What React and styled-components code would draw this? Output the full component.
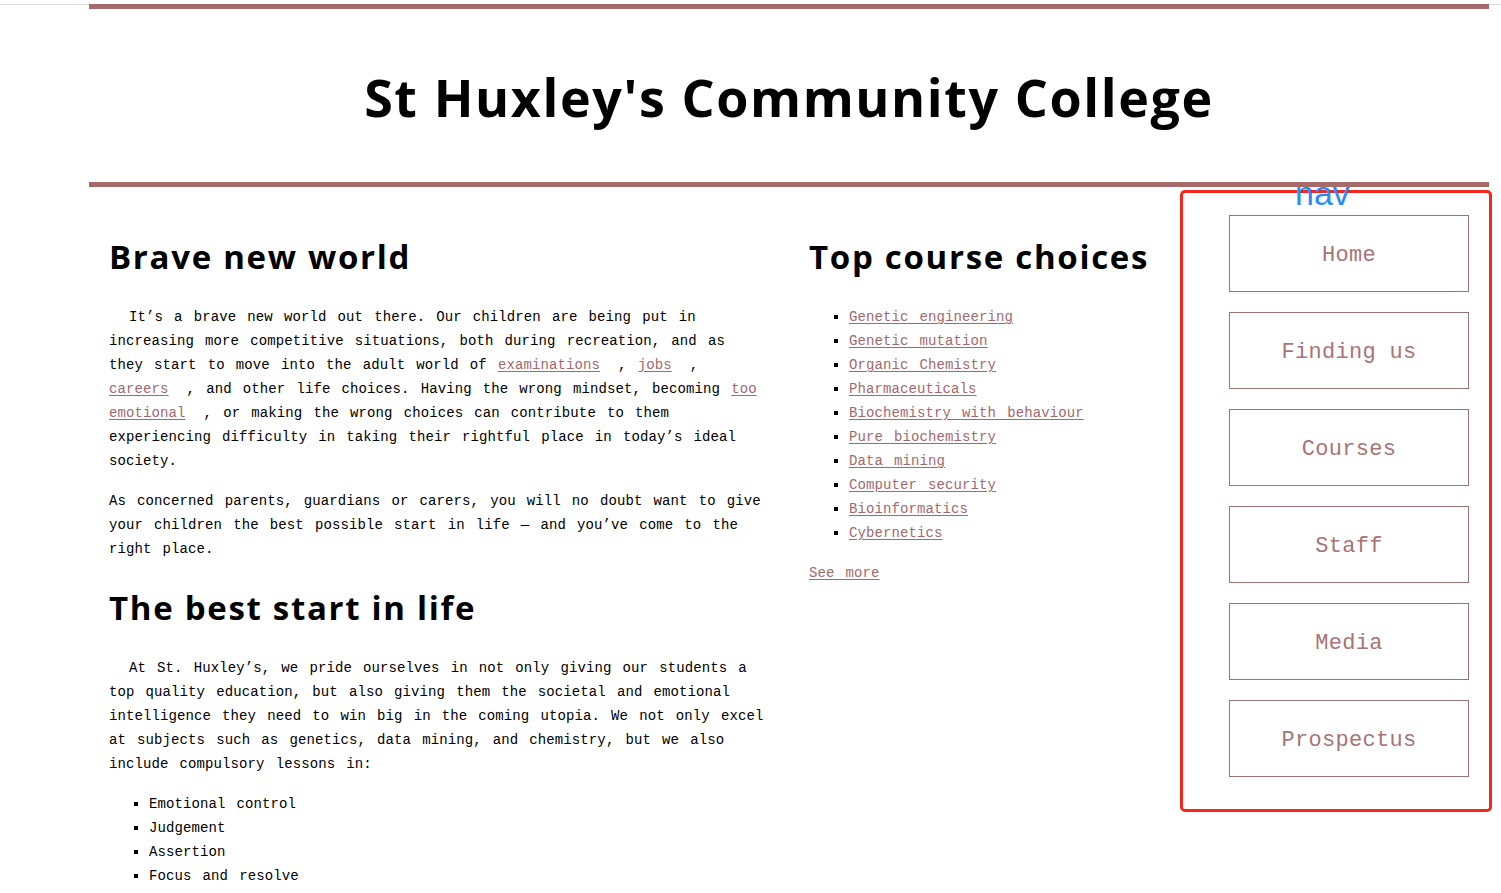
import React from 'react';
import styled, { createGlobalStyle } from 'styled-components';

const GlobalStyle = createGlobalStyle`
    html, body {
        margin: 0;
        padding: 0;
        background: #ffffff;
    }
    body {
        font-family: "Liberation Mono", "DejaVu Sans Mono", monospace;
        color: #000000;
    }
`;

const TopRule = styled.div`
    height: 1px;
    margin-top: 4px;
    background: #dedede;
`;

const Page = styled.div`
    width: 1400px;
    margin-left: 89px;
    margin-top: -1px;
`;

const Header = styled.header`
    height: 173px;
    display: flex;
    align-items: center;
    justify-content: center;
    border-top: 5px solid #a76a6a;
    border-bottom: 5px solid #a76a6a;
`;

const Title = styled.h1`
    margin: 2px 0 0;
    font-family: "Open Sans", "Noto Sans", sans-serif;
    font-weight: 700;
    font-size: 52px;
    letter-spacing: 1.6px;
`;

const Body = styled.div`
    display: flex;
    align-items: flex-start;
`;

const Article = styled.article`
    width: 659px;
    margin-right: 3px;
    padding: 23px 0 0 20px;
    flex-shrink: 0;
`;

const Aside = styled.aside`
    width: 371px;
    margin-left: 38px;
    padding-top: 23px;
    flex-shrink: 0;
`;

const Heading = styled.h2`
    margin: 27px 0 28px;
    font-family: "Open Sans", "Noto Sans", sans-serif;
    font-weight: 700;
    font-size: 33px;
    line-height: 40px;
    letter-spacing: 1.7px;
`;

const Para = styled.p`
    margin: 16px 0;
    font-size: 14px;
    line-height: 24px;
    letter-spacing: 0.1px;
    word-spacing: 2.6px;
    text-indent: ${(p) => (p.$indent ? '20px' : '0')};
`;

const List = styled.ul`
    margin: 16px 0;
    padding-left: 40px;
    list-style: square;
    font-size: 14px;
    line-height: 24px;
    letter-spacing: 0.1px;
    word-spacing: 2.6px;
`;

const Link = styled.a`
    color: #a2696d;
    text-decoration: underline;
    text-underline-offset: 2px;
    margin-right: ${(p) => (p.$gap ? '7px' : '0')};
`;

const Nav = styled.nav`
    position: relative;
    flex-shrink: 0;
    width: 260px;
    margin-top: 3px;
    padding: 22px 0 32px 46px;
    border: 3px solid #f5261b;
    border-radius: 5px;
    display: flex;
    flex-direction: column;
    gap: 20px;
`;

const NavLabel = styled.span`
    position: absolute;
    top: -17px;
    left: 112px;
    font-family: "Liberation Sans", Arial, sans-serif;
    font-size: 34px;
    line-height: 34px;
    color: #2b8cf0;
`;

const NavButton = styled.a`
    width: 238px;
    height: 75px;
    display: flex;
    align-items: center;
    justify-content: center;
    border: 1px solid #9b7474;
    color: #a87474;
    font-size: 22px;
    letter-spacing: 0.3px;
    text-decoration: none;

    span {
        position: relative;
        top: 2px;
    }
`;

const courses = [
    'Genetic engineering',
    'Genetic mutation',
    'Organic Chemistry',
    'Pharmaceuticals',
    'Biochemistry with behaviour',
    'Pure biochemistry',
    'Data mining',
    'Computer security',
    'Bioinformatics',
    'Cybernetics',
];

const lessons = ['Emotional control', 'Judgement', 'Assertion', 'Focus and resolve'];

const navItems = ['Home', 'Finding us', 'Courses', 'Staff', 'Media', 'Prospectus'];

const App = () => {
    return (
        <>
            <GlobalStyle />
            <TopRule />
            <Page>
                <Header>
                    <Title>St Huxley's Community College</Title>
                </Header>
                <Body>
                    <Article>
                        <Heading>Brave new world</Heading>
                        <Para $indent>
                            It’s a brave new world out there. Our children are being put in
                            increasing more competitive situations, both during recreation, and as
                            they start to move into the adult world of{' '}
                            <Link $gap href="#">examinations</Link> , <Link $gap href="#">jobs</Link> ,{' '}
                            <Link $gap href="#">careers</Link> , and other life choices. Having the wrong
                            mindset, becoming <Link $gap href="#">too emotional</Link> , or making the wrong
                            choices can contribute to them experiencing difficulty in taking their
                            rightful place in today’s ideal society.
                        </Para>
                        <Para>
                            As concerned parents, guardians or carers, you will no doubt want to give
                            your children the best possible start in life — and you’ve come to the
                            right place.
                        </Para>
                        <Heading>The best start in life</Heading>
                        <Para $indent>
                            At St. Huxley’s, we pride ourselves in not only giving our students a top
                            quality education, but also giving them the societal and emotional
                            intelligence they need to win big in the coming utopia. We not only excel at
                            subjects such as genetics, data mining, and chemistry, but we also include
                            compulsory lessons in:
                        </Para>
                        <List>
                            {lessons.map((l) => (
                                <li key={l}>{l}</li>
                            ))}
                        </List>
                    </Article>
                    <Aside>
                        <Heading>Top course choices</Heading>
                        <List>
                            {courses.map((c) => (
                                <li key={c}>
                                    <Link href="#">{c}</Link>
                                </li>
                            ))}
                        </List>
                        <Para>
                            <Link href="#">See more</Link>
                        </Para>
                    </Aside>
                    <Nav>
                        <NavLabel>nav</NavLabel>
                        {navItems.map((n) => (
                            <NavButton key={n} href="#">
                                <span>{n}</span>
                            </NavButton>
                        ))}
                    </Nav>
                </Body>
            </Page>
        </>
    );
};

export default App;
